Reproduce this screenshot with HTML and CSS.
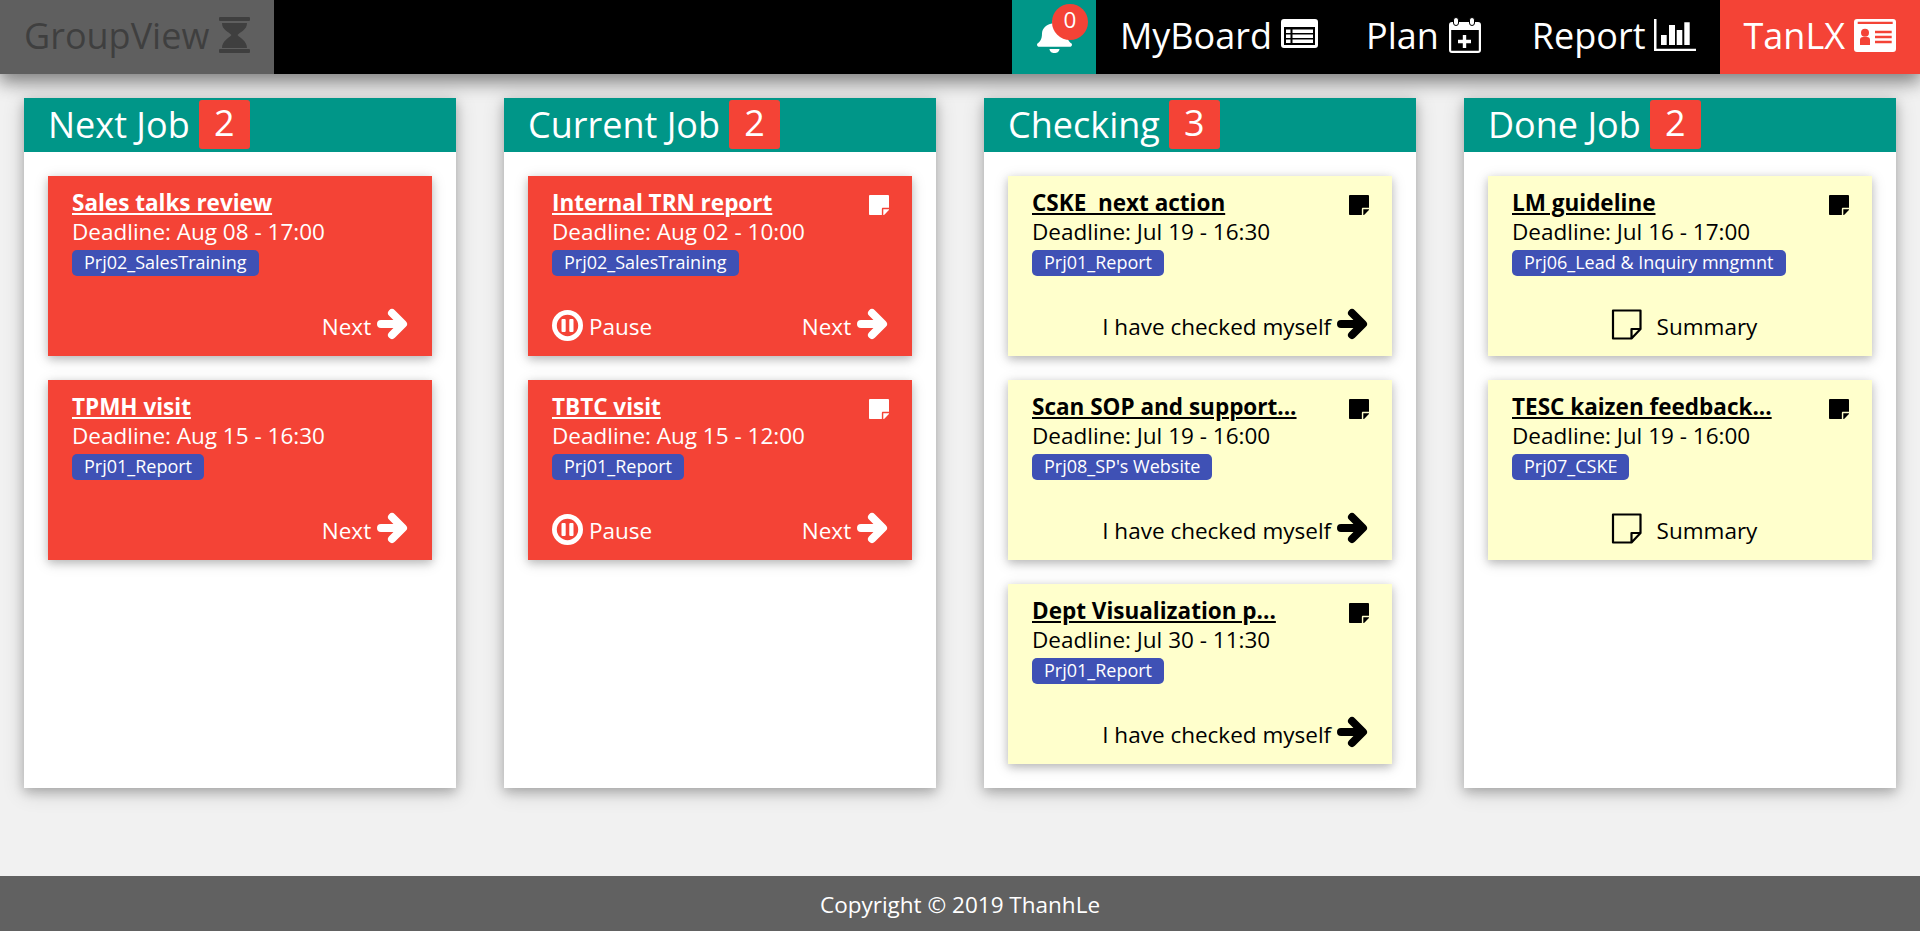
FILE: index.html
```html
<!DOCTYPE html>
<html lang="en">
<head>
<meta charset="utf-8">
<title>GroupView</title>
<link rel="stylesheet" href="styles.css">
</head>
<body>
<svg class="defs" width="0" height="0" aria-hidden="true">
  <symbol id="i-arrow" viewBox="0 0 31 32"><path fill="none" stroke="currentColor" stroke-width="8" stroke-linecap="round" stroke-linejoin="round" d="M4 16H25M15 5L26 16L15 27"/></symbol>
  <symbol id="i-note" viewBox="0 32 448 448"><path d="M312 320h136V56c0-13.3-10.7-24-24-24H24C10.7 32 0 42.7 0 56v400c0 13.3 10.7 24 24 24h264V344c0-13.2 10.8-24 24-24zm129 55l-98 98c-4.500 4.500-10.600 7-17 7h-6V352h128v6.100c0 6.300-2.500 12.400-7 16.900z"/></symbol>
  <symbol id="i-pause" viewBox="0 0 31 31"><circle cx="15.500" cy="15.500" r="13.100" fill="none" stroke="currentColor" stroke-width="4.800"/><rect x="9.500" y="9" width="4.200" height="13" rx="1"/><rect x="17.300" y="9" width="4.200" height="13" rx="1"/></symbol>
  <symbol id="i-note-o" viewBox="0 0 31 31"><path fill="none" stroke="currentColor" stroke-width="2.200" stroke-linejoin="round" d="M2 1.500H29.500V20L20.500 29.500H2ZM29.500 20H20.500V29.500"/></symbol>
</svg>

<header class="topbar">
  <a class="brand">GroupView
    <svg class="ic-hourglass" viewBox="0 0 31 36"><rect width="31" height="4" rx="1"/><rect y="32" width="31" height="4" rx="1"/><path d="M3 6H28C28 13 21 15 18.500 18C21 21 28 24 28 31H3C3 24 10 21 12.500 18C10 15 3 13 3 6Z"/></svg>
  </a>
  <div class="spacer"></div>
  <a class="bell-item">
    <svg class="bell" viewBox="0 0 448 512" preserveAspectRatio="none"><path d="M224 512c35.320 0 63.970-28.650 63.970-64H160.030c0 35.350 28.650 64 63.970 64zm215.390-149.710c-19.320-20.760-55.470-51.990-55.470-154.290 0-77.700-54.480-139.900-127.940-155.160V32c0-17.670-14.320-32-31.980-32s-31.980 14.330-31.980 32v20.840C118.560 68.100 64.080 130.300 64.080 208c0 102.300-36.150 133.530-55.470 154.290-6 6.450-8.660 14.160-8.610 21.710.11 16.400 12.980 32 32.100 32h383.800c19.120 0 32-15.600 32.100-32 .05-7.550-2.610-15.270-8.610-21.710z"/></svg>
    <span class="bell-badge">0</span>
  </a>
  <a class="nav-item tight">MyBoard
    <svg class="ic-list" viewBox="0 0 37 29"><path fill-rule="evenodd" d="M3 0H34A3 3 0 0 1 37 3V26A3 3 0 0 1 34 29H3A3 3 0 0 1 0 26V3A3 3 0 0 1 3 0ZM3 8V26H34V8Z"/><path d="M5 10.500H9.500V14.100H5ZM11.500 10.500H32V14.100H11.500ZM5 15.500H9.500V19.100H5ZM11.500 15.500H32V19.100H11.500ZM5 20.500H9.500V24.100H5ZM11.500 20.500H32V24.100H11.500Z"/></svg>
  </a>
  <a class="nav-item">Plan
    <svg class="ic-plan" viewBox="0 0 32 36"><path fill-rule="evenodd" d="M3 5H29A3 3 0 0 1 32 8V33A3 3 0 0 1 29 36H3A3 3 0 0 1 0 33V8A3 3 0 0 1 3 5ZM2.200 13V33.800H29.800V13Z"/><path d="M13.800 18H17.200V22.800H22V26.200H17.200V31H13.800V26.200H9V22.800H13.800Z"/><rect class="ring" x="4.500" y="0.500" width="5" height="8" rx="2.500"/><rect class="ring" x="20.500" y="0.500" width="5" height="8" rx="2.500"/></svg>
  </a>
  <a class="nav-item report">Report
    <svg class="ic-report" viewBox="0 0 42 32"><path d="M0 0H2.500V29.700H42V32H0ZM7 16H12.700V26H7ZM15 6H21V26H15ZM22.700 11H28.300V26H22.700ZM30.300 3.300H35.700V26H30.300Z"/></svg>
  </a>
  <a class="user-item tight">TanLX
    <svg class="ic-user" viewBox="0 0 42 33"><path fill-rule="evenodd" d="M3 0H39A3 3 0 0 1 42 3V30A3 3 0 0 1 39 33H3A3 3 0 0 1 0 30V3A3 3 0 0 1 3 0ZM3.700 2.700V5H38.700V2.700ZM11 9.700A4 4 0 1 0 11 17.700A4 4 0 1 0 11 9.700ZM6 26H16V21A3 3 0 0 0 13 18H9A3 3 0 0 0 6 21ZM21 11.700V14.300H37.700V11.700ZM21 16.700V19.300H37.700V16.700ZM21 21.700V24.300H37.700V21.700Z"/></svg>
  </a>
</header>

<main class="board">
  <section class="column">
    <h2 class="col-head">Next Job <span class="count">2</span></h2>
    <div class="col-body">
      <article class="card red">
        <div class="card-title"><a>Sales talks review</a></div>
        <div class="deadline">Deadline: Aug 08 - 17:00</div>
        <span class="tag">Prj02_SalesTraining</span>
        <div class="actions end"><a class="act">Next <svg class="arrow"><use href="#i-arrow"/></svg></a></div>
      </article>
      <article class="card red">
        <div class="card-title"><a>TPMH visit</a></div>
        <div class="deadline">Deadline: Aug 15 - 16:30</div>
        <span class="tag">Prj01_Report</span>
        <div class="actions end"><a class="act">Next <svg class="arrow"><use href="#i-arrow"/></svg></a></div>
      </article>
    </div>
  </section>

  <section class="column">
    <h2 class="col-head">Current Job <span class="count">2</span></h2>
    <div class="col-body">
      <article class="card red">
        <div class="card-title"><a>Internal TRN report</a><svg class="note"><use href="#i-note"/></svg></div>
        <div class="deadline">Deadline: Aug 02 - 10:00</div>
        <span class="tag">Prj02_SalesTraining</span>
        <div class="actions between"><a class="act"><svg class="pause"><use href="#i-pause"/></svg>Pause</a><a class="act">Next <svg class="arrow"><use href="#i-arrow"/></svg></a></div>
      </article>
      <article class="card red">
        <div class="card-title"><a>TBTC visit</a><svg class="note"><use href="#i-note"/></svg></div>
        <div class="deadline">Deadline: Aug 15 - 12:00</div>
        <span class="tag">Prj01_Report</span>
        <div class="actions between"><a class="act"><svg class="pause"><use href="#i-pause"/></svg>Pause</a><a class="act">Next <svg class="arrow"><use href="#i-arrow"/></svg></a></div>
      </article>
    </div>
  </section>

  <section class="column">
    <h2 class="col-head">Checking <span class="count">3</span></h2>
    <div class="col-body">
      <article class="card yellow">
        <div class="card-title"><a>CSKE  next action</a><svg class="note"><use href="#i-note"/></svg></div>
        <div class="deadline">Deadline: Jul 19 - 16:30</div>
        <span class="tag">Prj01_Report</span>
        <div class="actions end"><a class="act">I have checked myself <svg class="arrow"><use href="#i-arrow"/></svg></a></div>
      </article>
      <article class="card yellow">
        <div class="card-title"><a>Scan SOP and support...</a><svg class="note"><use href="#i-note"/></svg></div>
        <div class="deadline">Deadline: Jul 19 - 16:00</div>
        <span class="tag">Prj08_SP's Website</span>
        <div class="actions end"><a class="act">I have checked myself <svg class="arrow"><use href="#i-arrow"/></svg></a></div>
      </article>
      <article class="card yellow">
        <div class="card-title"><a>Dept Visualization p...</a><svg class="note"><use href="#i-note"/></svg></div>
        <div class="deadline">Deadline: Jul 30 - 11:30</div>
        <span class="tag">Prj01_Report</span>
        <div class="actions end"><a class="act">I have checked myself <svg class="arrow"><use href="#i-arrow"/></svg></a></div>
      </article>
    </div>
  </section>

  <section class="column">
    <h2 class="col-head">Done Job <span class="count">2</span></h2>
    <div class="col-body">
      <article class="card yellow">
        <div class="card-title"><a>LM guideline</a><svg class="note"><use href="#i-note"/></svg></div>
        <div class="deadline">Deadline: Jul 16 - 17:00</div>
        <span class="tag">Prj06_Lead &amp; Inquiry mngmnt</span>
        <div class="actions center"><a class="act"><svg class="note-o"><use href="#i-note-o"/></svg>Summary</a></div>
      </article>
      <article class="card yellow">
        <div class="card-title"><a>TESC kaizen feedback...</a><svg class="note"><use href="#i-note"/></svg></div>
        <div class="deadline">Deadline: Jul 19 - 16:00</div>
        <span class="tag">Prj07_CSKE</span>
        <div class="actions center"><a class="act"><svg class="note-o"><use href="#i-note-o"/></svg>Summary</a></div>
      </article>
    </div>
  </section>
</main>

<footer class="footer">Copyright © 2019 ThanhLe</footer>
</body>
</html>
```
FILE: styles.css
```css
* { box-sizing: border-box; }
html, body { height: 100%; }
body {
  margin: 0;
  background: #f1f1f1;
  font-family: "Open Sans", sans-serif;
  font-size: 22.5px;
  line-height: 30px;
  color: #000;
  display: flex;
  flex-direction: column;
  min-height: 931px;
  overflow: hidden;
}
.defs { position: absolute; }
svg { fill: currentColor; display: inline-block; flex: none; }

.topbar {
  height: 74px;
  flex: none;
  display: flex;
  background: #000;
  color: #fff;
  font-size: 36px;
  line-height: 68px;
  box-shadow: 0 8px 16px 0 rgba(0,0,0,.3), 0 6px 20px 0 rgba(0,0,0,.25);
}
.spacer { flex: 1; }
.brand, .nav-item, .user-item {
  display: flex;
  align-items: center;
  gap: 10px;
  padding: 0 24px 2px;
  white-space: nowrap;
}
.tight { gap: 9px; }
.report { padding-left: 27px; gap: 8px; }
.brand { background: #5f5f5f; color: #3f3f3f; width: 274px; }
.user-item { background: #f44336; }
.ic-hourglass { width: 31px; height: 36px; margin-bottom: 2px; }
.ic-list { width: 37px; height: 29px; margin-bottom: 5px; }
.ic-plan { width: 32px; height: 36px; margin-bottom: 2px; }
.ic-report { width: 42px; height: 32px; margin-bottom: 2px; }
.ic-user { width: 42px; height: 33px; margin-bottom: 2px; }
.ring { stroke: #000; stroke-width: 1; }
.bell-item { position: relative; width: 84px; padding: 20px 0 0 25px; background: #009688; }
.bell { display: block; width: 35px; height: 33px; }
.bell-badge {
  position: absolute;
  top: 4px;
  left: 40px;
  width: 36px;
  height: 36px;
  border-radius: 50%;
  background: #f44336;
  color: #fff;
  font-size: 22.5px;
  line-height: 32px;
  text-align: center;
}

.board {
  flex: none;
  display: grid;
  grid-template-columns: repeat(4, 432px);
  justify-content: space-between;
  padding: 24px 24px 0;
}
.column {
  background: #fff;
  box-shadow: 0 4px 10px 0 rgba(0,0,0,.2), 0 4px 20px 0 rgba(0,0,0,.19);
  display: flex;
  flex-direction: column;
}
.col-head {
  margin: 0;
  height: 54px;
  padding: 0 24px;
  background: #009688;
  color: #fff;
  font-size: 36px;
  line-height: 54px;
  font-weight: 400;
  display: flex;
  align-items: flex-start;
  gap: 9px;
}
.count {
  display: block;
  margin-top: 2px;
  width: 51px;
  height: 49px;
  line-height: 46px;
  border-radius: 3px;
  background: #f44336;
  text-align: center;
}
.col-body { padding: 24px; flex: 1; display: flex; flex-direction: column; gap: 24px; }

.card {
  height: 180px;
  padding: 12px 24px 0;
  box-shadow: 0 3px 8px 0 rgba(0,0,0,.18), 0 3px 14px 0 rgba(0,0,0,.15);
  display: flex;
  flex-direction: column;
  align-items: flex-start;
}
.red { background: #f44336; color: #fff; }
.yellow { background: #ffffcc; color: #000; }
.card-title {
  width: 100%;
  display: flex;
  justify-content: space-between;
  align-items: flex-start;
  font-weight: 700;
  line-height: 29px;
  white-space: pre;
}
.card-title a { text-decoration: underline; }
.note { width: 20px; height: 20px; margin: 7px -1px 0 0; }
.deadline { line-height: 29px; margin-bottom: -1px; }
.tag {
  height: 26px;
  padding: 0 12px;
  border-radius: 5px;
  background: #3f51b5;
  color: #fff;
  font-size: 18px;
  line-height: 24px;
  margin-top: 5px;
}
.actions { margin-top: auto; margin-bottom: 14px; width: 100%; display: flex; }
.end { justify-content: flex-end; }
.between { justify-content: space-between; }
.center { justify-content: center; padding-left: 8px; }
.act { display: flex; align-items: center; height: 30px; white-space: pre; }
.arrow { width: 31px; height: 32px; margin: -6px 0 0 0; }
.pause { width: 31px; height: 31px; margin: -4px 6px 0 0; }
.note-o { width: 31px; height: 31px; margin: -5px 15px 0 0; color: #000; }

.footer {
  margin-top: auto;
  height: 55px;
  flex: none;
  background: #616161;
  color: #fff;
  text-align: center;
  line-height: 57px;
}
```
